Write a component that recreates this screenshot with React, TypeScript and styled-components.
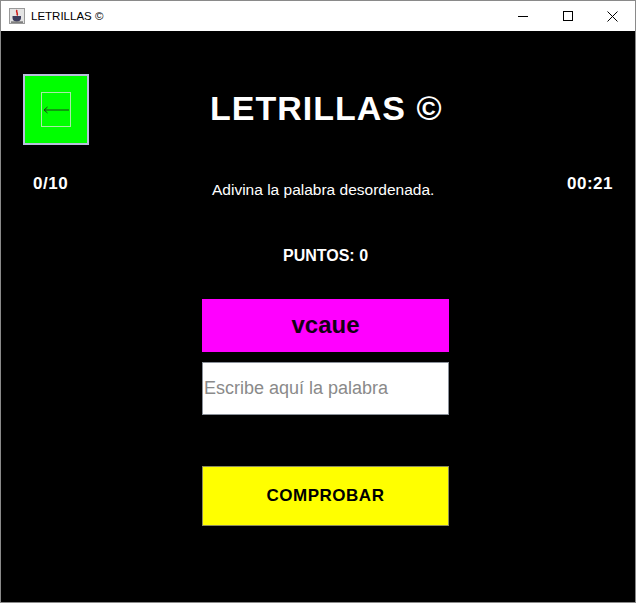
import React from "react";
import styled, { createGlobalStyle } from "styled-components";

const GlobalStyle = createGlobalStyle`
  html, body { margin: 0; padding: 0; background: #ffffff; }
  * { box-sizing: border-box; }
`;

const Window = styled.div`
  width: 636px;
  height: 603px;
  border: 1px solid #8a8a8a;
  display: flex;
  flex-direction: column;
  font-family: "Liberation Sans", Arial, sans-serif;
`;

const TitleBar = styled.div`
  height: 30px;
  background: #ffffff;
  display: flex;
  align-items: center;
  flex-shrink: 0;
`;

const AppIcon = styled.svg`
  margin-left: 8px;
  width: 16px;
  height: 16px;
  flex-shrink: 0;
`;

const WindowTitle = styled.span`
  margin-left: 6px;
  font-size: 11.5px;
  color: #000000;
  flex: 1;
`;

const CaptionButton = styled.div`
  width: 45px;
  height: 30px;
  display: flex;
  align-items: center;
  justify-content: center;
`;

const Content = styled.div`
  flex: 1;
  background: #000000;
  color: #ffffff;
  display: flex;
  flex-direction: column;
`;

const HeaderRow = styled.div`
  margin-top: 43px;
  padding-left: 22px;
  display: flex;
  align-items: flex-start;
`;

const BackButton = styled.button`
  width: 66px;
  height: 71px;
  background: #00ff00;
  border: 2px solid #b9bfdc;
  padding: 0;
  display: flex;
  align-items: center;
  justify-content: center;
  cursor: pointer;
`;

const FocusRing = styled.div`
  width: 30px;
  height: 35px;
  border: 1px solid #a8e8a8;
  display: flex;
  align-items: center;
  justify-content: center;
`;

const Title = styled.h1`
  margin: 17px 0 0 121px;
  font-size: 34px;
  line-height: 34px;
  font-weight: bold;
  letter-spacing: 1px;
  color: #ffffff;
`;

const StatsRow = styled.div`
  margin-top: 30px;
  padding: 0 22px 0 32px;
  display: grid;
  grid-template-columns: 179px auto 1fr;
  align-items: start;
`;

const Stat = styled.span<{ $align?: "left" | "right" }>`
  font-size: 17px;
  line-height: 17px;
  font-weight: bold;
  letter-spacing: 0.5px;
  text-align: ${(p) => p.$align ?? "left"};
`;

const Instruction = styled.span`
  margin-top: 5.5px;
  font-size: 15.5px;
  line-height: 17px;
`;

const Board = styled.div`
  margin-left: 201px;
  width: 247px;
  display: flex;
  flex-direction: column;
  align-items: stretch;
`;

const Score = styled.div`
  margin-top: 50px;
  text-align: center;
  font-size: 16px;
  line-height: 16px;
  font-weight: bold;
`;

const WordBox = styled.div`
  margin-top: 35px;
  height: 53px;
  background: #ff00ff;
  display: flex;
  align-items: center;
  justify-content: center;
  font-size: 24px;
  font-weight: bold;
  color: #140014;
`;

const WordInput = styled.input`
  margin-top: 10px;
  height: 53px;
  width: 100%;
  background: #ffffff;
  border: 1px solid #8a9099;
  padding: 0 0 0 1px;
  font-family: "Liberation Sans", Arial, sans-serif;
  font-size: 18px;
  color: #000000;
  outline: none;
  &::placeholder { color: #8a8a8a; }
`;

const CheckButton = styled.button`
  margin-top: 51px;
  height: 60px;
  width: 100%;
  background: #ffff00;
  border: 1px solid #8c8c5a;
  font-family: "Liberation Sans", Arial, sans-serif;
  font-size: 17px;
  font-weight: bold;
  letter-spacing: 0.5px;
  color: #000000;
  cursor: pointer;
`;

export default function App() {
  return (
    <>
      <GlobalStyle />
      <Window>
        <TitleBar>
          <AppIcon viewBox="0 0 16 16">
            <rect x="0.5" y="0.5" width="15" height="15" fill="#e4e4e4" stroke="#9a9a9a" />
            <path d="M8 2 C6.5 4, 9.5 5, 8 7.5" stroke="#d01c1c" strokeWidth="1.6" fill="none" />
            <path d="M3.5 8 H12 V10 C12 12.5, 10 13.5, 7.75 13.5 C5.5 13.5, 3.5 12.5, 3.5 10 Z" fill="#3c3c5c" />
            <rect x="2" y="13.5" width="12" height="1.2" fill="#555" />
          </AppIcon>
          <WindowTitle>LETRILLAS ©</WindowTitle>
          <CaptionButton>
            <svg width="10" height="10" viewBox="0 0 10 10">
              <line x1="0" y1="5.5" x2="10" y2="5.5" stroke="#000" strokeWidth="1" />
            </svg>
          </CaptionButton>
          <CaptionButton>
            <svg width="10" height="10" viewBox="0 0 10 10">
              <rect x="0.5" y="0.5" width="9" height="9" fill="none" stroke="#000" strokeWidth="1" />
            </svg>
          </CaptionButton>
          <CaptionButton>
            <svg width="11" height="11" viewBox="0 0 11 11">
              <path d="M0.5 0.5 L10.5 10.5 M10.5 0.5 L0.5 10.5" stroke="#000" strokeWidth="1" />
            </svg>
          </CaptionButton>
        </TitleBar>
        <Content>
          <HeaderRow>
            <BackButton aria-label="Volver">
              <FocusRing>
                <svg width="28" height="10" viewBox="0 0 28 10">
                  <path d="M2 5 H27 M2 5 L5.5 2 M2 5 L5.5 8" stroke="#1c3a1c" strokeWidth="1" fill="none" />
                </svg>
              </FocusRing>
            </BackButton>
            <Title>LETRILLAS ©</Title>
          </HeaderRow>
          <StatsRow>
            <Stat>0/10</Stat>
            <Instruction>Adivina la palabra desordenada.</Instruction>
            <Stat $align="right">00:21</Stat>
          </StatsRow>
          <Board>
            <Score>PUNTOS: 0</Score>
            <WordBox>vcaue</WordBox>
            <WordInput placeholder="Escribe aquí la palabra" />
            <CheckButton>COMPROBAR</CheckButton>
          </Board>
        </Content>
      </Window>
    </>
  );
}
